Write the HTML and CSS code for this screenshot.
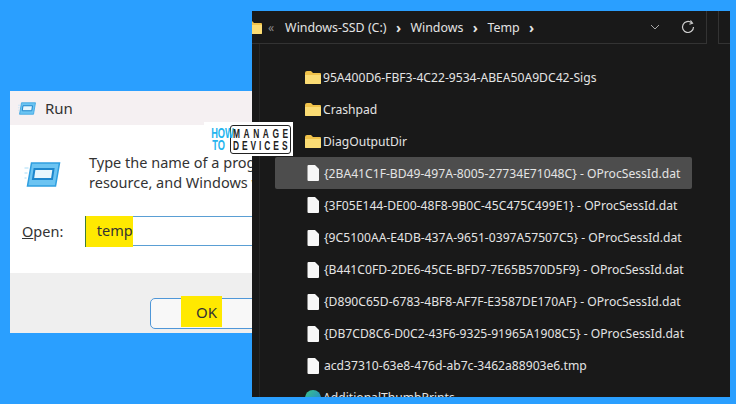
FILE: index.html
```html
<!DOCTYPE html>
<html>
<head>
    <title>Run temp</title>
    <link rel="stylesheet" href="styles.css">
</head>
<body>
    <svg class="defs" width="0" height="0">
        <symbol id="folder" viewBox="0 0 16 13">
            <path d="M0 2 Q0 0 2 0 H6 L8 2 H15 Q16 2 16 3 V12 Q16 13 15 13 H1 Q0 13 0 12 Z" fill="#f0c24a"/>
            <path d="M0 4 H16 V12 Q16 13 15 13 H1 Q0 13 0 12 Z" fill="#fbdc74"/>
        </symbol>
        <symbol id="file" viewBox="0 0 12 16">
            <path d="M0.5 1 Q0.5 0 1.5 0 H8 L12 4 V15 Q12 16 11 16 H1.5 Q0.5 16 0.5 15 Z" fill="#f7f7f7"/>
        </symbol>
        <symbol id="runicon" viewBox="0 0 36 25">
            <path d="M7 1 H35 L31 24 H3 Z" fill="#6cc4f2" stroke="#2f9fe0" stroke-width="1.5"/>
            <path d="M10 7 H29 L27.5 17 H8.5 Z" fill="#e8f6fd" stroke="#1d86cc" stroke-width="2"/>
            <path d="M0 6 H4 M0 11 H3 M0 16 H2" stroke="#a8dcf7" stroke-width="1"/>
        </symbol>
    </svg>

    <div class="run-dialog">
        <div class="run-title">
            <svg class="run-title-icon"><use href="#runicon"/></svg>
            <span>Run</span>
        </div>
        <div class="run-body">
            <div class="run-intro">
                <svg class="run-big-icon"><use href="#runicon"/></svg>
                <p>Type the name of a program, folder, document, or<br>resource, and Windows will open it for you.</p>
            </div>
            <div class="run-open">
                <label><u>O</u>pen:</label>
                <div class="run-input"><mark>temp</mark></div>
            </div>
        </div>
        <div class="run-footer">
            <div class="ok-button"><mark>OK</mark></div>
        </div>
    </div>

    <div class="explorer">
        <div class="address-row">
            <div class="address-bar">
                <svg class="crumb-folder"><use href="#folder"/></svg>
                <span class="crumb-back">«</span>
                <span class="crumb">Windows-SSD (C:)</span>
                <span class="crumb-sep">›</span>
                <span class="crumb">Windows</span>
                <span class="crumb-sep">›</span>
                <span class="crumb">Temp</span>
                <span class="crumb-sep">›</span>
                <svg class="chevron" viewBox="0 0 10 6"><path d="M1 1 L5 5 L9 1" fill="none" stroke="#a8a8a8" stroke-width="1"/></svg>
                <svg class="refresh" viewBox="0 0 14 14"><path d="M12.5 7 A5.5 5.5 0 1 1 10.6 2.8" fill="none" stroke="#cfcfcf" stroke-width="1.2"/><path d="M9.5 0.5 L11.5 3.2 L8.4 4.2" fill="none" stroke="#cfcfcf" stroke-width="1.2"/></svg>
            </div>
            <div class="search-box"></div>
        </div>
        <div class="file-pane">
            <div class="file-list">
                <div class="file-row"><svg class="icon-folder"><use href="#folder"/></svg>95A400D6-FBF3-4C22-9534-ABEA50A9DC42-Sigs</div>
                <div class="file-row"><svg class="icon-folder"><use href="#folder"/></svg>Crashpad</div>
                <div class="file-row"><svg class="icon-folder"><use href="#folder"/></svg>DiagOutputDir</div>
                <div class="file-row selected"><svg class="icon-file"><use href="#file"/></svg>{2BA41C1F-BD49-497A-8005-27734E71048C} - OProcSessId.dat</div>
                <div class="file-row"><svg class="icon-file"><use href="#file"/></svg>{3F05E144-DE00-48F8-9B0C-45C475C499E1} - OProcSessId.dat</div>
                <div class="file-row"><svg class="icon-file"><use href="#file"/></svg>{9C5100AA-E4DB-437A-9651-0397A57507C5} - OProcSessId.dat</div>
                <div class="file-row"><svg class="icon-file"><use href="#file"/></svg>{B441C0FD-2DE6-45CE-BFD7-7E65B570D5F9} - OProcSessId.dat</div>
                <div class="file-row"><svg class="icon-file"><use href="#file"/></svg>{D890C65D-6783-4BF8-AF7F-E3587DE170AF} - OProcSessId.dat</div>
                <div class="file-row"><svg class="icon-file"><use href="#file"/></svg>{DB7CD8C6-D0C2-43F6-9325-91965A1908C5} - OProcSessId.dat</div>
                <div class="file-row"><svg class="icon-file"><use href="#file"/></svg>acd37310-63e8-476d-ab7c-3462a88903e6.tmp</div>
                <div class="file-row"><span class="icon-edge"></span>AdditionalThumbPrints</div>
            </div>
        </div>
    </div>

    <div class="logo">
        <div class="logo-how">HOW<br>TO</div>
        <div class="logo-name">
            <span class="logo-manage">MANAGE</span>
            <span class="logo-devices">DEVICES</span>
        </div>
    </div>
</body>
</html>
```

FILE: styles.css
```css
body {
    margin: 0;
    width: 736px;
    height: 404px;
    position: relative;
    overflow: hidden;
    background-color: #2a9fff;
    font-family: "Noto Sans", "Open Sans", sans-serif;
}

.defs {
    position: absolute;
}

mark {
    background: #ffe900;
    color: #333;
}

/* run dialog */
.run-dialog {
    position: absolute;
    left: 10px;
    top: 91px;
    width: 300px;
    height: 242px;
    display: flex;
    flex-direction: column;
    background: #fff;
    color: #333;
}

.run-title {
    height: 34px;
    display: flex;
    align-items: center;
    gap: 9px;
    padding-left: 8px;
    background: #f5f0f2;
    font-size: 15px;
}

.run-title-icon {
    width: 18px;
    height: 13px;
}

.run-body {
    flex: 1;
    display: flex;
    flex-direction: column;
}

.run-intro {
    display: flex;
    padding: 27px 0 0 14px;
    height: 64px;
}

.run-big-icon {
    width: 37px;
    height: 25px;
    margin-top: 10px;
    flex-shrink: 0;
}

.run-intro p {
    margin: 0 0 0 28px;
    font-size: 14.5px;
    line-height: 20px;
    white-space: nowrap;
}

.run-open {
    display: flex;
    align-items: center;
    padding-left: 12px;
    font-size: 14.5px;
}

.run-open label {
    width: 67px;
}

.run-input {
    width: 220px;
    height: 28px;
    border: 1px solid #5a9fd4;
    border-left: 1px solid #3f7d3a;
    position: relative;
}

.run-input mark {
    position: absolute;
    left: -5px;
    top: -1px;
    width: 36px;
    height: 31px;
    padding-left: 12px;
    font-size: 14.5px;
    line-height: 28px;
    box-shadow: inset 5px 0 0 -4px #3f7d3a;
}

.run-footer {
    height: 60px;
    padding: 25px 0 0 140px;
    box-sizing: border-box;
    background: #efefef;
}

.ok-button {
    width: 150px;
    height: 29px;
    border: 1px solid #4f97d8;
    border-radius: 5px;
    background: #f8f8f8;
    position: relative;
}

.ok-button mark {
    position: absolute;
    left: 30px;
    top: -3px;
    width: 41px;
    height: 31px;
    padding-left: 10px;
    box-sizing: border-box;
    font-size: 15px;
    line-height: 33px;
    text-align: center;
}

/* explorer window */
.explorer {
    position: absolute;
    left: 252px;
    top: 11px;
    width: 478px;
    height: 386px;
    display: flex;
    flex-direction: column;
    overflow: hidden;
    background: #191919;
    color: #e4e4e4;
}

.address-row {
    height: 33px;
    display: flex;
    flex-shrink: 0;
}

.address-bar {
    width: 454px;
    display: flex;
    align-items: center;
    border-right: 1px solid #333;
    border-bottom: 1px solid #333;
    font-size: 12.4px;
    position: relative;
}

.crumb-folder {
    width: 16px;
    height: 13px;
    margin-left: -6px;
}

.crumb-back {
    margin-left: 6px;
    color: #8a8a8a;
    font-size: 12px;
}

.crumb {
    white-space: nowrap;
}

.crumb-back + .crumb {
    margin-left: 11px;
}

.crumb-sep {
    width: 24px;
    text-align: center;
    font-weight: 700;
    font-size: 14px;
}

.chevron {
    width: 10px;
    height: 6px;
    margin-left: 106px;
}

.refresh {
    width: 14px;
    height: 14px;
    margin-left: 21px;
}

.search-box {
    margin-left: 11px;
    flex: 1;
    border-left: 1px solid #333;
    border-bottom: 1px solid #333;
}

.file-pane {
    flex: 1;
    margin-left: 7px;
    padding: 17px 0 0 15px;
    border-left: 1px solid #262626;
}

.file-row {
    width: 417px;
    height: 32.1px;
    display: flex;
    align-items: center;
    padding-left: 30px;
    box-sizing: border-box;
    font-size: 12.13px;
    white-space: nowrap;
}

.file-row.selected {
    background: #4d4d4d;
    border-radius: 2px;
}

.icon-folder {
    width: 16px;
    height: 13px;
    margin-right: 2px;
}

.icon-file {
    width: 12px;
    height: 16px;
    margin: 0 5px 0 2px;
    flex-shrink: 0;
}

.icon-edge {
    width: 16px;
    height: 16px;
    margin-right: 2px;
    border-radius: 50%;
    background: linear-gradient(135deg, #3bc38b, #1d7fd6);
}

/* logo sits over both windows */
.logo {
    position: absolute;
    left: 204px;
    top: 122px;
    width: 89px;
    height: 34px;
    display: flex;
    align-items: center;
    gap: 5px;
    background: #fff;
    box-sizing: border-box;
    font-family: "Liberation Sans", sans-serif;
    font-weight: 700;
}

.logo-how {
    width: 21px;
    flex-shrink: 0;
    text-align: right;
    color: #25b4ee;
    font-size: 14px;
    line-height: 12px;
    transform: scaleX(0.66);
    transform-origin: right center;
}

.logo-name {
    border: 1px solid #222;
    border-radius: 3px;
    padding: 2px 0 0 2px;
    width: 61px;
    height: 29px;
    box-sizing: border-box;
    font-size: 12px;
    line-height: 12px;
    color: #222;
    white-space: nowrap;
}

.logo-manage,
.logo-devices {
    display: block;
    transform: scaleX(0.7);
    transform-origin: left center;
}

.logo-manage {
    letter-spacing: 5.1px;
}

.logo-devices {
    letter-spacing: 4.2px;
}
```
